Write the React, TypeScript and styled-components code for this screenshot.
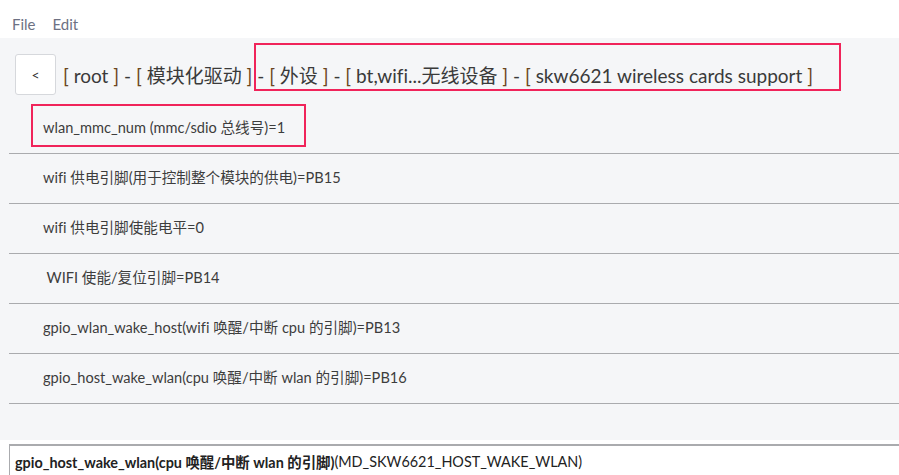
import React from 'react'
import styled, { createGlobalStyle } from 'styled-components'

const GlobalStyle = createGlobalStyle`
  html, body {
    margin: 0;
    padding: 0;
    background: #ffffff;
    font-family: "Lato", "Noto Sans CJK SC", sans-serif;
    font-variant-ligatures: none;
    overflow: hidden;
  }
`

const Page = styled.div`
  width: 899px;
  height: 475px;
  display: flex;
  flex-direction: column;
  background: #ffffff;
`

const MenuBar = styled.div`
  height: 38px;
  display: flex;
  align-items: center;
  gap: 17px;
  padding: 10px 0 0 12px;
  box-sizing: border-box;
  font-size: 15px;
  color: #6d7183;
`

const Main = styled.div`
  background: #f5f6f8;
  height: 402px;
  display: flex;
  flex-direction: column;
`

const Crumbs = styled.div`
  display: flex;
  align-items: center;
  height: 66px;
  padding: 6px 0 0 15px;
  box-sizing: border-box;
`

const BackButton = styled.button`
  width: 41px;
  height: 41px;
  margin-right: 7px;
  background: #ffffff;
  border: 1px solid #d6d8dc;
  border-radius: 3px;
  font-family: inherit;
  font-size: 14px;
  color: #333;
  padding: 0;
`

const Path = styled.div`
  font-size: 19px;
  color: #3a3a3a;
  white-space: nowrap;
  position: relative;
`

const Bracket = styled.span`
  color: #6a4520;
`

type Box = { $l: number; $r: number; $t: number; $b: number }

const Mark = styled.span<Box>`
  position: relative;
  &::after {
    content: '';
    position: absolute;
    left: ${({ $l }) => $l}px;
    right: ${({ $r }) => $r}px;
    top: ${({ $t }) => $t}px;
    bottom: ${({ $b }) => $b}px;
    border: 2px solid #f0245a;
    pointer-events: none;
  }
`

const List = styled.div`
  margin-left: 9px;
  display: flex;
  flex-direction: column;
`

const Row = styled.div`
  height: 50px;
  border-bottom: 1px solid #aaabae;
  display: flex;
  align-items: center;
  padding: 0 0 5px 34px;
  box-sizing: border-box;
  font-size: 14.6px;
  color: #3d3d3d;
  white-space: pre;
`

const Tip = styled.div`
  margin: 4px 0 0 9px;
  flex: 1;
  border-top: 2px solid #aaabae;
  border-left: 1px solid #aaabae;
  background: #ffffff;
  display: flex;
  align-items: center;
  padding: 2px 0 0 5px;
  font-size: 14.4px;
  color: #222;
`

const Strong = styled.b`
  font-weight: 700;
`

const crumbs = ['root', '模块化驱动', '外设', 'bt,wifi...无线设备', 'skw6621 wireless cards support']

const rows = [
  'wifi 供电引脚(用于控制整个模块的供电)=PB15',
  'wifi 供电引脚使能电平=0',
  ' WIFI 使能/复位引脚=PB14',
  'gpio_wlan_wake_host(wifi 唤醒/中断 cpu 的引脚)=PB13',
  'gpio_host_wake_wlan(cpu 唤醒/中断 wlan 的引脚)=PB16',
]

const Crumb = ({ label, first }: { label: string; first?: boolean }) => (
  <>
    {!first && ' - '}
    <Bracket>[</Bracket> {label} <Bracket>]</Bracket>
  </>
)

export default function App() {
  return (
    <Page>
      <GlobalStyle />
      <MenuBar>
        <span>File</span>
        <span>Edit</span>
      </MenuBar>
      <Main>
        <Crumbs>
          <BackButton>&lt;</BackButton>
          <Path>
            <Crumb label={crumbs[0]} first />
            <Crumb label={crumbs[1]} />
            <Mark $l={2} $r={-28} $t={-21} $b={-4}>
              <Crumb label={crumbs[2]} />
              <Crumb label={crumbs[3]} />
              <Crumb label={crumbs[4]} />
            </Mark>
          </Path>
        </Crumbs>
        <List>
          <Row>
            <Mark $l={-12} $r={-21} $t={-12} $b={-10}>wlan_mmc_num (mmc/sdio 总线号)=1</Mark>
          </Row>
          {rows.map((r) => (
            <Row key={r}>{r}</Row>
          ))}
        </List>
      </Main>
      <Tip>
        <Strong>gpio_host_wake_wlan(cpu 唤醒/中断 wlan 的引脚)</Strong>(MD_SKW6621_HOST_WAKE_WLAN)
      </Tip>
    </Page>
  )
}
